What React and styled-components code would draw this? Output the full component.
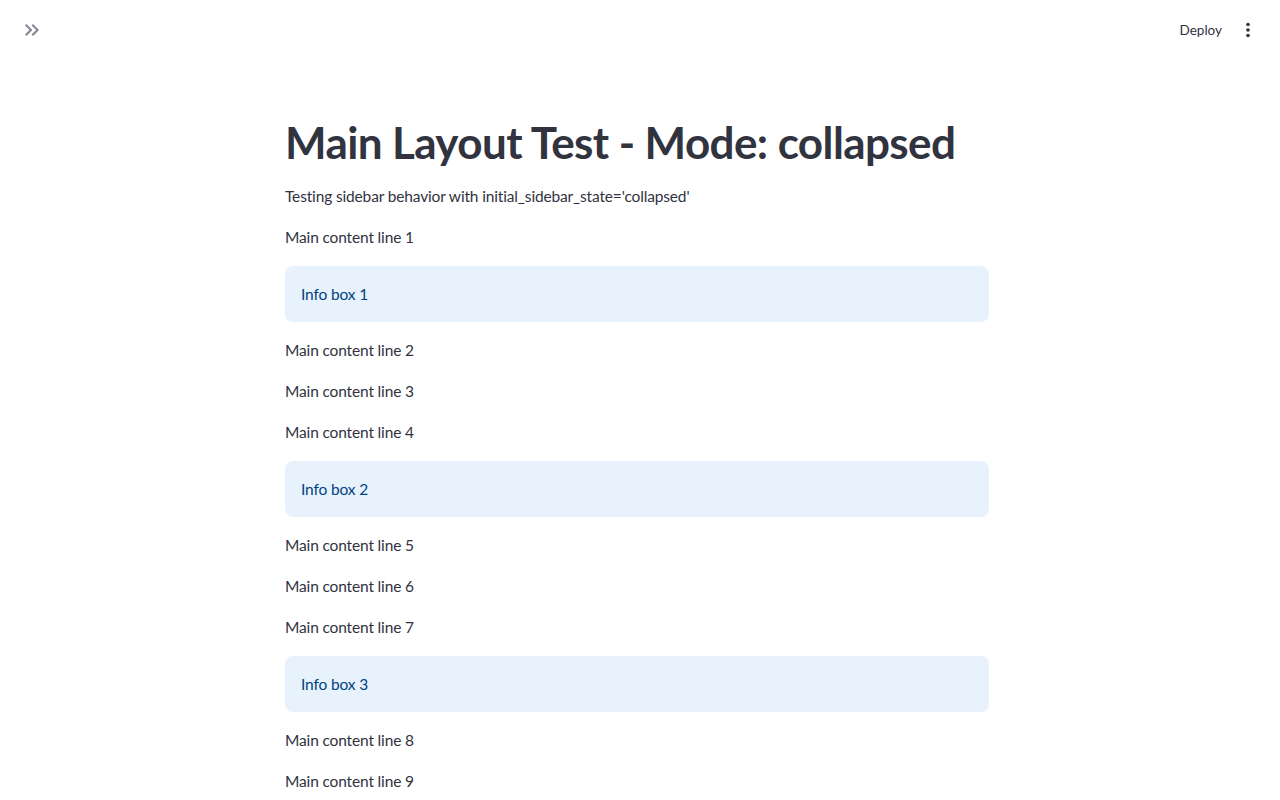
import React from "react";
import styled, { createGlobalStyle } from "styled-components";

const GlobalStyle = createGlobalStyle`
  html, body {
    margin: 0;
    padding: 0;
    background: #ffffff;
  }
  body {
    font-family: "Lato", "Noto Sans", sans-serif;
    color: rgb(49, 51, 63);
  }
`;

const Header = styled.header`
  position: fixed;
  top: 0;
  left: 0;
  right: 0;
  height: 60px;
  display: flex;
  align-items: center;
  justify-content: space-between;
  padding: 0 16px;
  background: #ffffff;
  z-index: 10;
`;

const IconButton = styled.button`
  width: 32px;
  height: 32px;
  display: flex;
  align-items: center;
  justify-content: center;
  padding: 0;
  border: none;
  background: transparent;
  color: ${({ $muted }) => ($muted ? "rgb(128, 132, 149)" : "rgb(49, 51, 63)")};
  cursor: pointer;
`;

const Toolbar = styled.div`
  display: flex;
  align-items: center;
  gap: 2px;
`;

const DeployButton = styled.button`
  border: none;
  background: transparent;
  font-family: inherit;
  font-size: 13.5px;
  color: rgb(49, 51, 63);
  padding: 6px 8px;
  cursor: pointer;
`;

const Main = styled.main`
  max-width: 704px;
  margin: 0 auto;
  padding: 96px 0 64px;
  transform: translateX(-3px);
  display: flex;
  flex-direction: column;
  gap: 16px;
`;

const Title = styled.h1`
  margin: 0 0 -1px;
  padding-top: 20px;
  font-size: 44px;
  font-weight: 700;
  line-height: 1.2;
  letter-spacing: -0.6px;
`;

const Text = styled.p`
  margin: 0;
  font-size: 15.5px;
  letter-spacing: -0.15px;
  line-height: 25px;
`;

const Info = styled.div`
  background: rgba(28, 131, 225, 0.1);
  color: rgb(0, 66, 128);
  border-radius: 8px;
  padding: 16px;
  font-size: 15.5px;
  letter-spacing: -0.15px;
  line-height: 24px;
`;

const DoubleChevron = () => (
  <svg width="24" height="24" viewBox="0 0 24 24" fill="currentColor">
    <path d="M6.41 6L5 7.41 9.58 12 5 16.59 6.41 18l6-6z" />
    <path d="M13 6l-1.41 1.41L16.17 12l-4.58 4.59L13 18l6-6z" />
  </svg>
);

const MoreVert = () => (
  <svg width="22" height="22" viewBox="0 0 24 24" fill="currentColor">
    <circle cx="12" cy="6" r="2" />
    <circle cx="12" cy="12" r="2" />
    <circle cx="12" cy="18" r="2" />
  </svg>
);

const blocks = [
  { type: "text", value: "Main content line 1" },
  { type: "info", value: "Info box 1" },
  { type: "text", value: "Main content line 2" },
  { type: "text", value: "Main content line 3" },
  { type: "text", value: "Main content line 4" },
  { type: "info", value: "Info box 2" },
  { type: "text", value: "Main content line 5" },
  { type: "text", value: "Main content line 6" },
  { type: "text", value: "Main content line 7" },
  { type: "info", value: "Info box 3" },
  { type: "text", value: "Main content line 8" },
  { type: "text", value: "Main content line 9" },
  { type: "text", value: "Main content line 10" },
];

export default function App() {
  return (
    <>
      <GlobalStyle />
      <Header>
        <IconButton $muted aria-label="Expand sidebar">
          <DoubleChevron />
        </IconButton>
        <Toolbar>
          <DeployButton>Deploy</DeployButton>
          <IconButton aria-label="Main menu">
            <MoreVert />
          </IconButton>
        </Toolbar>
      </Header>
      <Main>
        <Title>Main Layout Test - Mode: collapsed</Title>
        <Text>Testing sidebar behavior with initial_sidebar_state='collapsed'</Text>
        {blocks.map((b, i) =>
          b.type === "info" ? (
            <Info key={i}>{b.value}</Info>
          ) : (
            <Text key={i}>{b.value}</Text>
          )
        )}
      </Main>
    </>
  );
}
